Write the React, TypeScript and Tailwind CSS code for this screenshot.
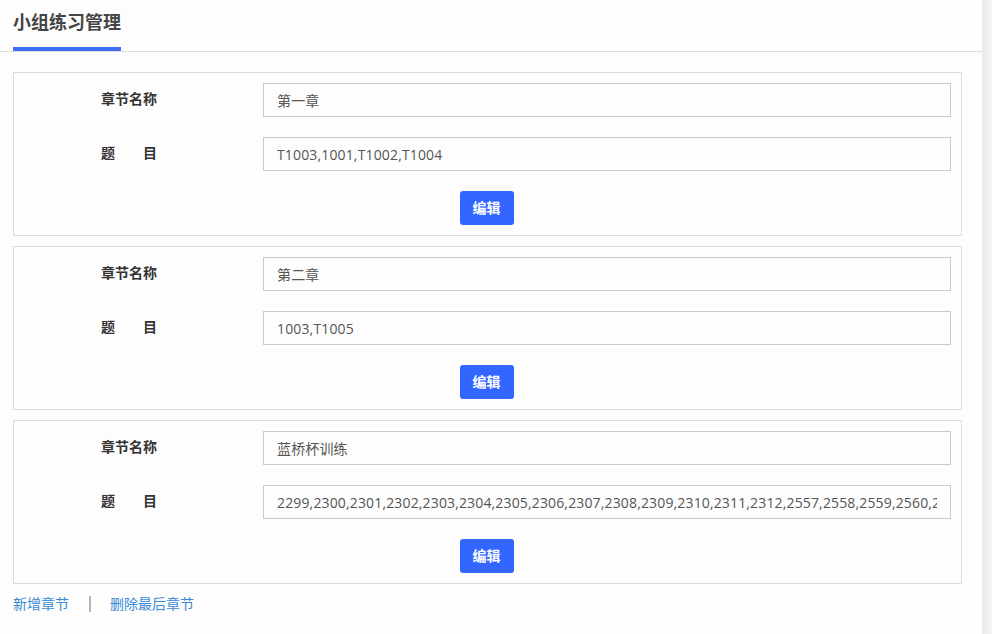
const chapters = [
  { name: "第一章", items: "T1003,1001,T1002,T1004" },
  { name: "第二章", items: "1003,T1005" },
  {
    name: "蓝桥杯训练",
    items:
      "2299,2300,2301,2302,2303,2304,2305,2306,2307,2308,2309,2310,2311,2312,2557,2558,2559,2560,2561,2562,2563",
  },
];

function ChapterCard({ name, items }: { name: string; items: string }) {
  return (
    <div className="border border-[#dcdcdc] bg-[#fdfdfd] p-[10px]">
      <div className="flex h-[34px] items-center">
        <div className="w-[239px] pb-[3px] pl-[77px] text-[14px] font-bold text-[#333]">章节名称</div>
        <input
          readOnly
          value={name}
          className="h-[34px] flex-1 border border-[#cbcbcb] bg-[#fdfdfd] px-[13px] text-[14px] tracking-[0.15px] text-[#555] outline-none"
        />
      </div>
      <div className="mt-[20px] flex h-[34px] items-center">
        <div className="w-[239px] pb-[3px] pl-[77px] text-[14px] font-bold text-[#333]">
          题<span className="inline-block w-[28px]" />目
        </div>
        <input
          readOnly
          value={items}
          className="h-[34px] flex-1 border border-[#cbcbcb] bg-[#fdfdfd] px-[13px] text-[14px] tracking-[0.15px] text-[#555] outline-none"
        />
      </div>
      <div className="mt-[20px] flex justify-center pr-[2px]">
        <button className="h-[34px] w-[54px] rounded-[3px] bg-[#3366ff] pb-[2px] text-[14px] font-bold text-white">
          编辑
        </button>
      </div>
    </div>
  );
}

export default function App() {
  return (
    <div
      className="flex h-[634px] w-[992px] bg-[#fdfdfd]"
      style={{ fontFamily: '"Open Sans", "Noto Sans CJK SC", sans-serif' }}
    >
      <div className="flex-1">
        <div className="flex h-[52px] items-end border-b border-[#dedede] px-[13px]">
          <div className="flex h-full flex-col justify-end">
            <div className="pb-[11px] text-[18px] font-bold text-[#444]">小组练习管理</div>
            <div className="h-[4px] w-[108px] bg-[#3f6ef6]" />
          </div>
        </div>
        <div className="flex flex-col gap-[10px] pl-[13px] pr-[20px] pt-[20px]">
          {chapters.map((c) => (
            <ChapterCard key={c.name} name={c.name} items={c.items} />
          ))}
        </div>
        <div className="mt-[9px] flex items-center pl-[13px] text-[14px] text-[#3a8ad6]">
          <span>新增章节</span>
          <span className="ml-[20px] mr-[19px] h-[16px] w-[2px] bg-[#b4b4b4]" />
          <span>删除最后章节</span>
        </div>
      </div>
      <div className="w-[10px] bg-gradient-to-r from-[#e9eaee] to-[#f3f4f6]" />
    </div>
  );
}
